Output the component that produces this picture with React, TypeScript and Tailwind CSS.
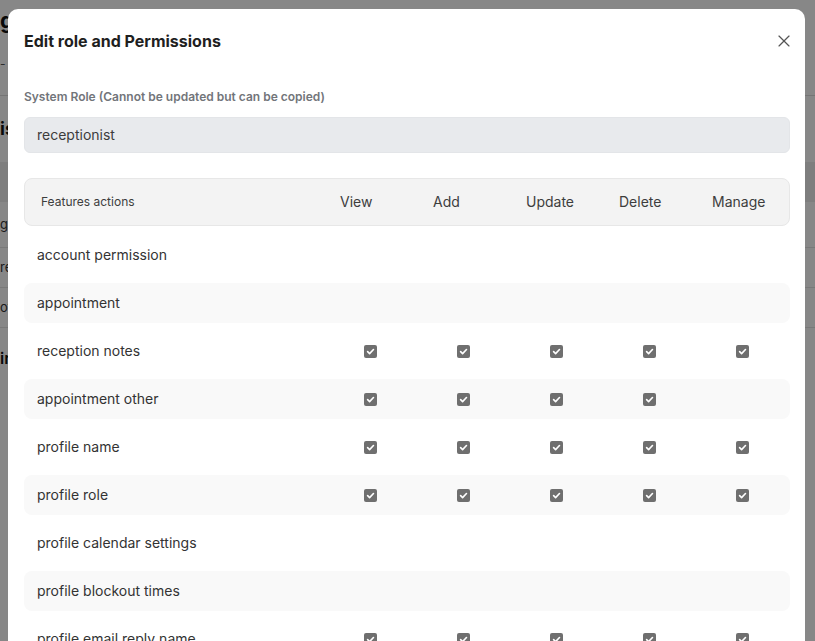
import { X } from "lucide-react";

const cols = ["View", "Add", "Update", "Delete", "Manage"];

const rows: { name: string; perms: boolean[] }[] = [
  { name: "account permission", perms: [false, false, false, false, false] },
  { name: "appointment", perms: [false, false, false, false, false] },
  { name: "reception notes", perms: [true, true, true, true, true] },
  { name: "appointment other", perms: [true, true, true, true, false] },
  { name: "profile name", perms: [true, true, true, true, true] },
  { name: "profile role", perms: [true, true, true, true, true] },
  { name: "profile calendar settings", perms: [false, false, false, false, false] },
  { name: "profile blockout times", perms: [false, false, false, false, false] },
  { name: "profile email reply name", perms: [true, true, true, true, true] },
];

function Check() {
  return (
    <span className="flex h-[13px] w-[13px] items-center justify-center rounded-[2px] bg-[#6f6f6f]">
      <svg width="9" height="9" viewBox="0 0 10 10" fill="none">
        <path d="M1.8 5.2 4 7.3 8.3 2.8" stroke="white" strokeWidth="1.8" strokeLinecap="round" strokeLinejoin="round" />
      </svg>
    </span>
  );
}

// page sitting behind the dialog, only its left edge shows
function BackPage() {
  return (
    <div className="flex h-screen flex-col bg-white text-[#111]">
      <div className="flex h-[96px] flex-col border-b border-[#ddd]">
        <div className="pt-[6px] text-[22px] font-bold leading-7">g</div>
        <div className="pt-[22px] text-xs leading-4 text-[#555]">-</div>
      </div>
      <div className="flex h-[66px] items-center">
        <div className="text-lg font-bold">is</div>
      </div>
      <div className="h-[40px] bg-[#eeeeee]"></div>
      <div className="flex h-[46px] items-center border-b border-[#e5e5e5]">
        <div className="text-[13px] text-[#333]">g</div>
      </div>
      <div className="flex h-[40px] items-center border-b border-[#e5e5e5]">
        <div className="text-[13px] text-[#333]">re</div>
      </div>
      <div className="flex h-[40px] items-center border-b border-[#e5e5e5]">
        <div className="text-[13px] text-[#333]">ot</div>
      </div>
      <div className="flex h-[60px] items-center">
        <div className="text-base font-semibold">ir</div>
      </div>
    </div>
  );
}

export default function App() {
  return (
    <div className="relative h-screen overflow-hidden font-['Inter',sans-serif]">
      <BackPage />
      <div className="fixed inset-0 flex items-start justify-center bg-black/[0.47] pl-[8px] pr-[10px] pt-[9px]">
        <div className="w-full rounded-t-[10px] bg-white pb-6 pl-4 pr-[15px]">
          <div className="flex items-center justify-between pt-5">
            <h2 className="text-base font-bold leading-6 text-[#1f1f1f]">Edit role and Permissions</h2>
            <X size={20} strokeWidth={1.4} className="mr-[-4px] text-[#555]" />
          </div>

          <div className="mt-9 text-xs font-semibold leading-4 text-[#72757a]">
            System Role (Cannot be updated but can be copied)
          </div>
          <div className="mt-3 flex h-9 items-center rounded-md border border-[#e3e5e8] bg-[#e8eaed] pl-3 text-sm text-[#3c3c3c]">
            receptionist
          </div>

          <div className="mt-[25px] grid h-12 grid-cols-[315px_93px_93px_93px_93px_1fr] items-center rounded-lg border border-[#e7e7e7] bg-[#f3f3f3] text-[#3d3d3d]">
            <div className="pl-4 text-xs">Features actions</div>
            {cols.map((c) => (
              <div key={c} className="text-sm">{c}</div>
            ))}
          </div>

          <div className="mt-[9px] flex flex-col gap-2">
            {rows.map((r, i) => (
              <div
                key={r.name}
                className={
                  "grid h-10 grid-cols-[316px_93px_93px_93px_93px_1fr] items-center rounded-lg " +
                  (i % 2 === 1 ? "bg-[#f9f9f9]" : "bg-white")
                }
              >
                <div className="pl-[13px] text-sm text-[#333]">{r.name}</div>
                {r.perms.map((p, j) => (
                  <div key={j} className="pl-[24px]">
                    {p && <Check />}
                  </div>
                ))}
              </div>
            ))}
          </div>
        </div>
      </div>
    </div>
  );
}
